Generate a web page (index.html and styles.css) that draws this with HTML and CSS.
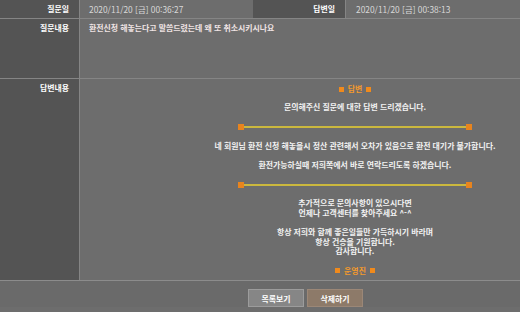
FILE: index.html
```html
<!DOCTYPE html>
<html lang="ko">
<head>
    <meta charset="UTF-8">
    <meta name="viewport" content="width=device-width, initial-scale=1.0">
    <title>1:1 문의</title>
    <link rel="stylesheet" href="styles.css">
</head>
<body>
    <div class="qna-view">
        <div class="row row-date">
            <div class="label">질문일</div>
            <div class="value date">2020/11/20 [금] 00:36:27</div>
            <div class="label label-mid">답변일</div>
            <div class="value date value-last">2020/11/20 [금] 00:38:13</div>
        </div>
        <div class="row row-question">
            <div class="label">질문내용</div>
            <div class="value question">환전신청 해놓는다고 말씀드렸는데 왜 또 취소시키시나요</div>
        </div>
        <div class="row row-answer">
            <div class="label">답변내용</div>
            <div class="value answer">
                <p class="mark mark-top"><span class="sq"></span>답변<span class="sq"></span></p>
                <p class="greet">문의해주신 질문에 대한 답변 드리겠습니다.</p>
                <div class="divider divider-1"><span class="dot"></span><span class="bar"></span><span class="dot"></span></div>
                <p class="body-1">네 회원님 환전 신청 해놓을시 정산 관련해서 오차가 있음으로 환전 대기가 불가합니다.</p>
                <p class="body-2">환전가능하실때 저희쪽에서 바로 연락드리도록 하겠습니다.</p>
                <div class="divider divider-2"><span class="dot"></span><span class="bar"></span><span class="dot"></span></div>
                <p class="extra">추가적으로 문의사항이 있으시다면<br>언제나 고객센터를 찾아주세요 ^-^</p>
                <p class="thanks">항상 저희와 함께 좋은일들만 가득하시기 바라며<br>항상 건승을 기원합니다.<br>감사합니다.</p>
                <p class="mark mark-bottom"><span class="sq"></span>운영진<span class="sq"></span></p>
            </div>
        </div>
        <div class="actions">
            <button class="btn btn-list">목록보기</button>
            <button class="btn btn-delete">삭제하기</button>
        </div>
    </div>
</body>
</html>
```

FILE: styles.css
```css
body {
    margin: 0;
    padding: 0;
    background-color: #6b6b6b;
    font-family: "Noto Sans CJK KR", "Noto Sans", sans-serif;
    font-size: 7.9px;
    color: #f2f2f2;
}
.qna-view {
    width: 520px;
    height: 312px;
    overflow: hidden;
    background-color: #6d6d6d;
}
.row {
    display: flex;
    border-bottom: 1px solid #858585;
}
.label {
    width: 69px;
    flex-shrink: 0;
    padding-right: 10px;
    text-align: right;
    font-weight: 700;
    color: #fff;
    background-color: #545454;
    border-right: 1px solid #858585;
}
.value {
    flex-grow: 1;
    padding-left: 9px;
}
.row-date {
    height: 18px;
    line-height: 18px;
}
.row-date .value {
    flex-grow: 0;
    width: 216px;
}
.label-mid {
    width: 82px;
}
.value-last {
    flex-grow: 1;
    padding-left: 10px;
}
.date {
    color: #d8d8d8;
    font-weight: 400;
    font-size: 8.4px;
}
.row-question {
    height: 59px;
}
.row-question .label,
.row-question .value,
.row-answer .label {
    padding-top: 4px;
    line-height: 10px;
}
.question {
    color: #f0e4e4;
    font-weight: 700;
}
.row-answer {
    height: 201px;
    border-bottom-color: #8c8c8c;
}
.answer {
    padding-left: 110px;
    padding-right: 0;
    text-align: center;
    font-weight: 700;
    line-height: 10px;
}
.answer p {
    margin: 0;
}
.mark {
    color: #f39a2c;
    display: flex;
    justify-content: center;
    align-items: center;
    gap: 4px;
}
.sq {
    display: inline-block;
    width: 5px;
    height: 5px;
    background-color: #f08a1c;
}
.answer .mark-top {
    margin-top: 5px;
}
.answer .greet {
    margin-top: 8px;
}
.divider {
    display: flex;
    align-items: center;
    justify-content: center;
    height: 6px;
}
.divider-1 {
    margin-top: 12px;
}
.divider-2 {
    margin-top: 12px;
}
.dot {
    width: 6px;
    height: 6px;
    background-color: #e8841e;
    flex-shrink: 0;
}
.bar {
    width: 222px;
    height: 2px;
    background-color: #cbb83e;
}
.answer .body-1 {
    margin-top: 11px;
}
.answer .body-2 {
    margin-top: 9px;
}
.answer .extra {
    margin-top: 10px;
}
.answer .thanks {
    margin-top: 9px;
    line-height: 9.5px;
}
.answer .mark-bottom {
    margin-top: 10px;
}
.actions {
    display: flex;
    gap: 3px;
    padding-top: 8px;
    padding-left: 248px;
    background-color: #6a6a6a;
}
.btn {
    width: 56px;
    height: 18px;
    padding: 0;
    font-family: "Noto Sans CJK KR", "Noto Sans", sans-serif;
    font-size: 7.9px;
    font-weight: 700;
    color: #fff;
    cursor: pointer;
}
.btn-list {
    background-color: #868686;
    border: 1px solid #9c9c9c;
}
.btn-delete {
    background-color: #8d7a69;
    border: 1px solid #9b8777;
}
```
